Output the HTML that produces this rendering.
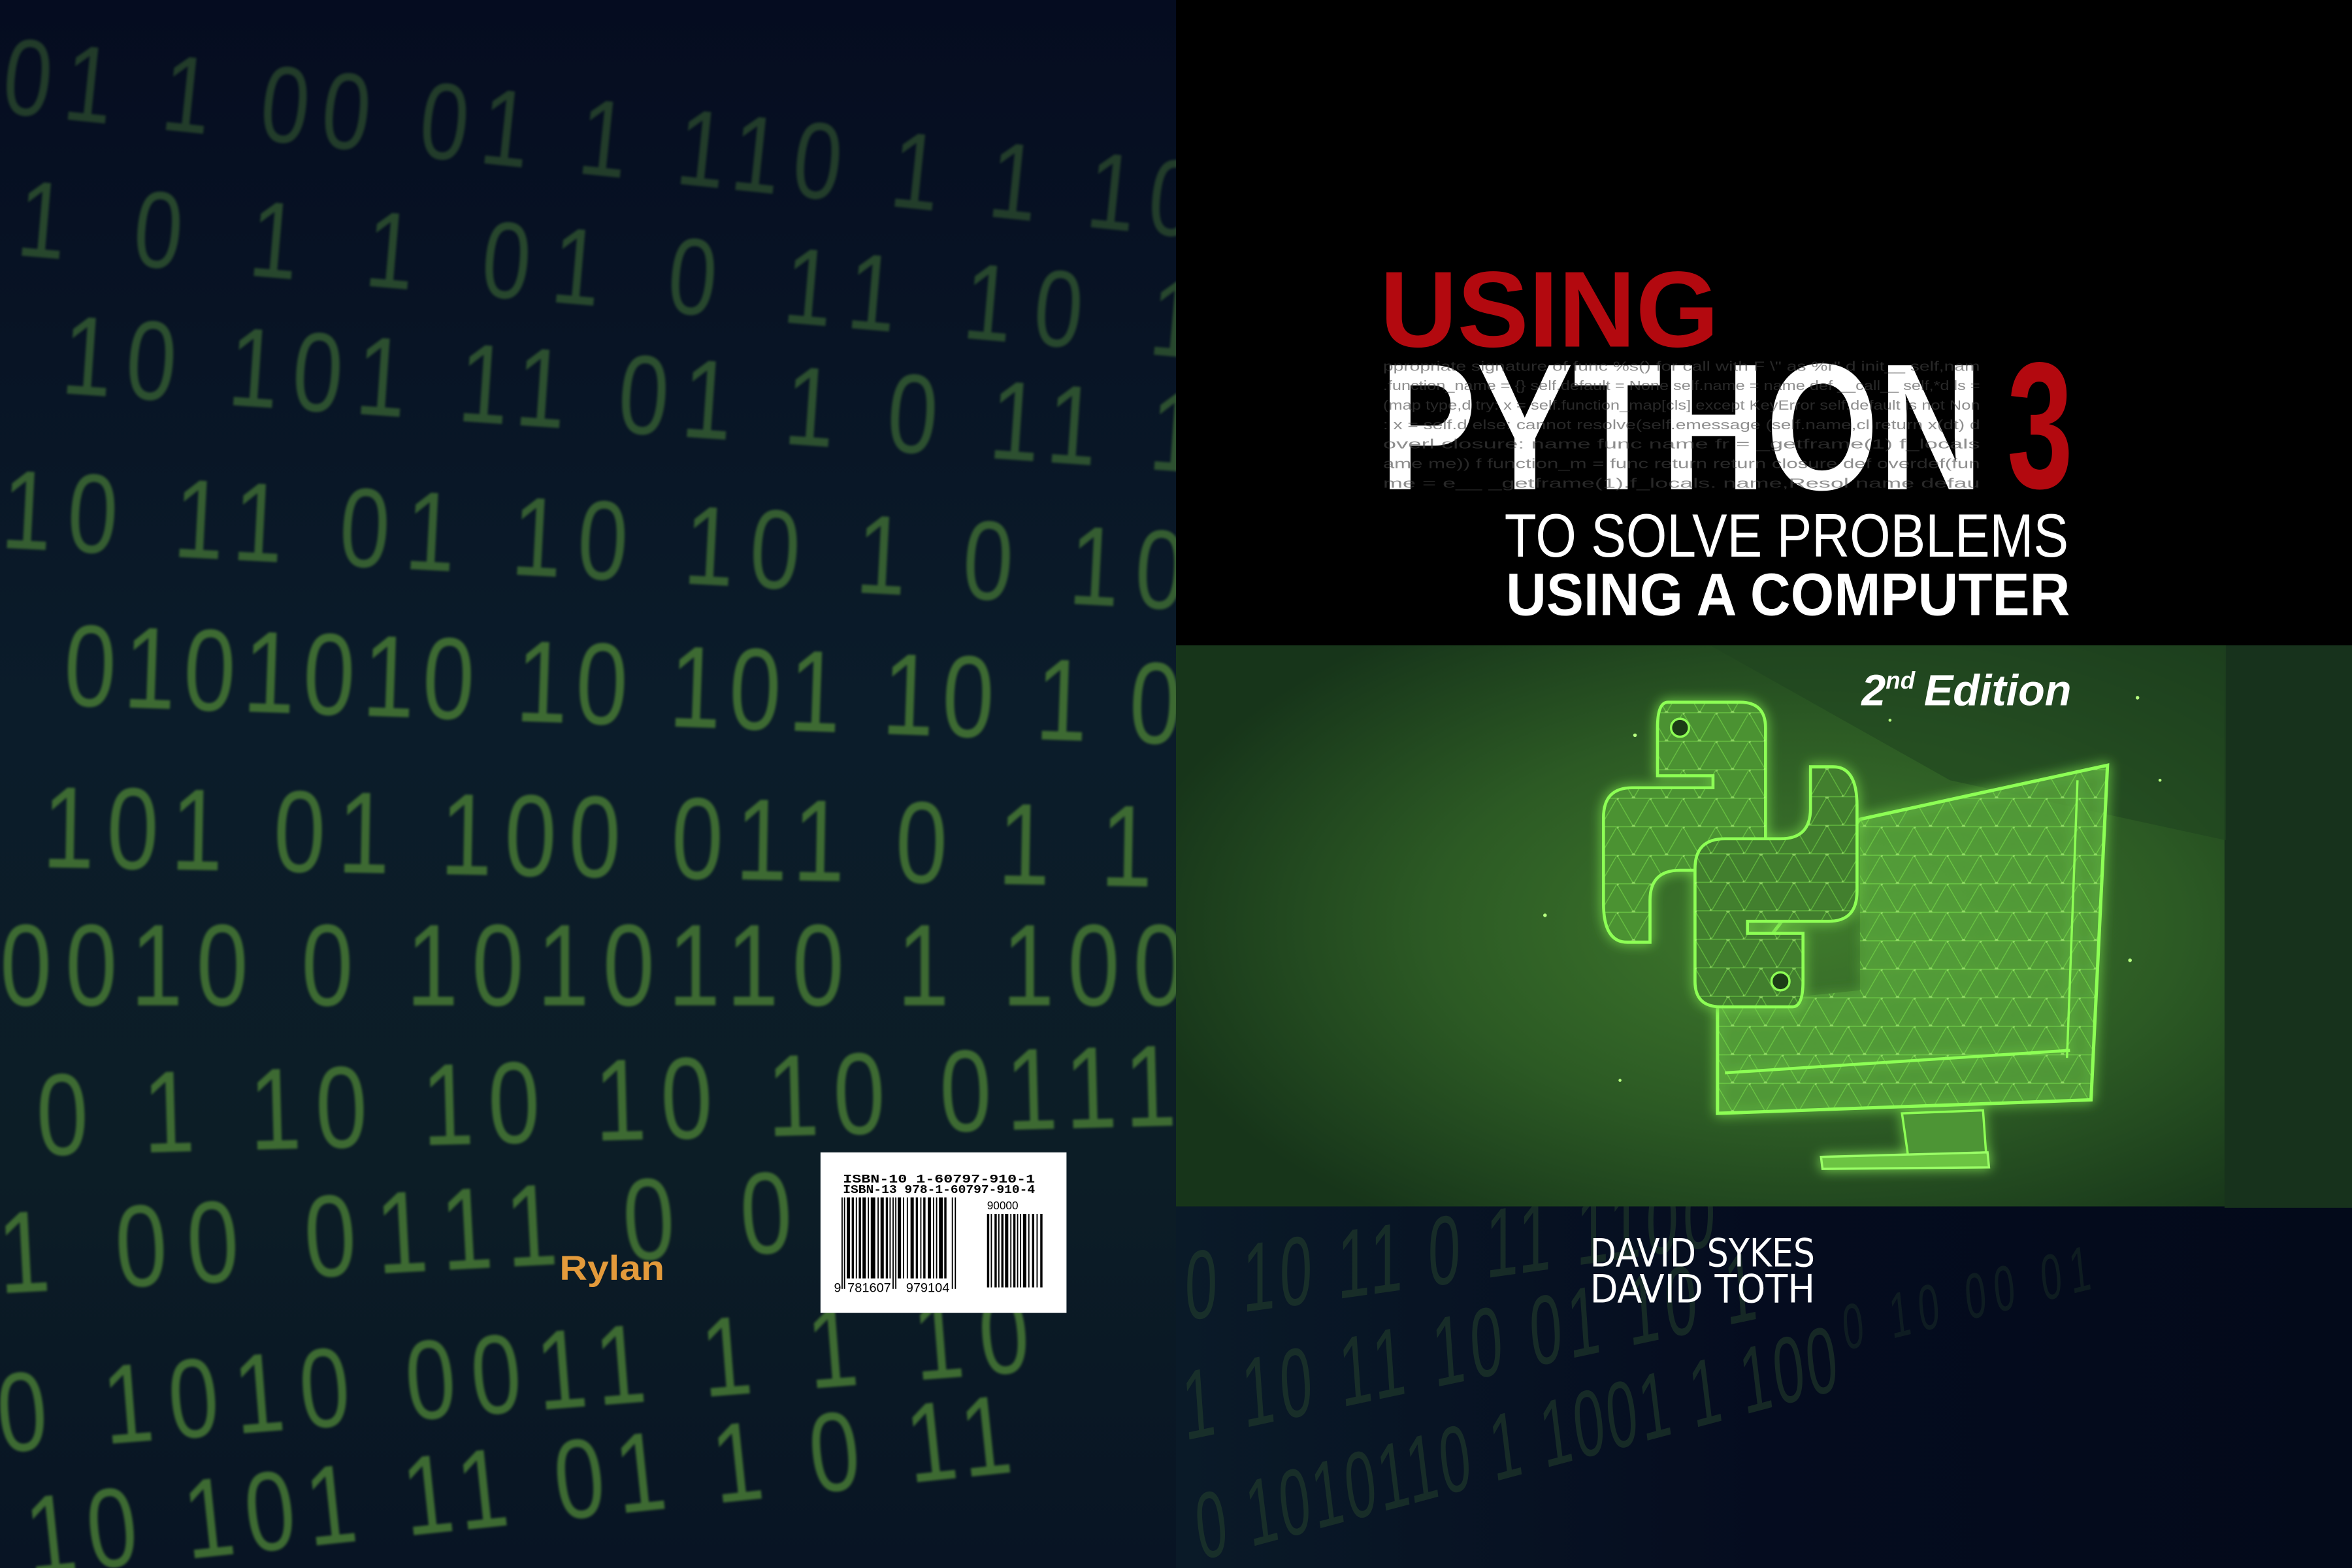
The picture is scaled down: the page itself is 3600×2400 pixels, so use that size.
<!DOCTYPE html>
<html><head><meta charset="utf-8"><style>
html,body{margin:0;padding:0;background:#060e20;}
svg{display:block;}
</style></head><body>
<svg width="3600" height="2400" viewBox="0 0 1568 1045" preserveAspectRatio="none" xmlns="http://www.w3.org/2000/svg">
<defs>
<linearGradient id="lbg" x1="0" y1="0" x2="0" y2="1">
<stop offset="0" stop-color="#050c20"/><stop offset="0.45" stop-color="#0b1c2a"/><stop offset="0.75" stop-color="#0c1d26"/><stop offset="1" stop-color="#081424"/>
</linearGradient>
<linearGradient id="rbg" x1="0" y1="0" x2="1" y2="0">
<stop offset="0" stop-color="#0a1a28"/><stop offset="0.5" stop-color="#050c1f"/><stop offset="1" stop-color="#030a1a"/>
</linearGradient>
<radialGradient id="gbg" cx="0.6" cy="0.5" r="0.65">
<stop offset="0" stop-color="#3f7a2c"/><stop offset="0.55" stop-color="#2c5a24"/><stop offset="1" stop-color="#17351a"/>
</radialGradient>
<pattern id="mesh" width="22" height="19" patternUnits="userSpaceOnUse">
<path d="M0,0 L22,0 M0,0 L11,19 L22,0 M0,19 L22,19" stroke="#8cff55" stroke-width="0.6" fill="none" opacity="0.7"/>
<circle cx="0" cy="0" r="1.3" fill="#b6ff80"/><circle cx="11" cy="19" r="1.3" fill="#b6ff80"/>
</pattern>
<clipPath id="leftclip"><rect x="0" y="0" width="784" height="1045"/></clipPath>
<filter id="glow" x="-20%" y="-20%" width="140%" height="140%"><feGaussianBlur stdDeviation="4" result="b"/><feMerge><feMergeNode in="b"/><feMergeNode in="SourceGraphic"/></feMerge></filter>
<filter id="soft"><feGaussianBlur stdDeviation="0.8"/></filter>
</defs>

<rect x="0" y="0" width="784" height="1045" fill="url(#lbg)"/>
<rect x="784" y="803" width="784" height="242" fill="url(#rbg)"/>

<!-- left digits -->
<g clip-path="url(#leftclip)">
<g font-family="Liberation Sans, sans-serif" fill="#3c6a33" filter="url(#soft)" lengthAdjust="spacing">
<g opacity="0.5"><text transform="translate(0,75) rotate(6) scale(1,1.25)" font-size="58" textLength="800" lengthAdjust="spacing">01  1  00  01  1  110  1  1  10</text></g>
<g opacity="0.6"><text transform="translate(10,170) rotate(5) scale(1,1.25)" font-size="58" textLength="790" lengthAdjust="spacing">1  0  1  1  01  0  11  10  1</text></g>
<g opacity="0.7"><text transform="translate(40,262) rotate(4) scale(1,1.25)" font-size="60" textLength="760" lengthAdjust="spacing">10  101  11  01  1  0  11  1</text></g>
<g opacity="0.85"><text transform="translate(0,365) rotate(3) scale(1,1.25)" font-size="60" textLength="790" lengthAdjust="spacing">10  11  01  10  10  1  0  10</text></g>
<text transform="translate(42,470) rotate(2) scale(1,1.25)" font-size="62" textLength="745" lengthAdjust="spacing">0101010 10  101  10  1 0</text>
<text transform="translate(28,578) rotate(1) scale(1,1.25)" font-size="62" textLength="740" lengthAdjust="spacing">101  01  100  011  0  1  1</text>
<text transform="translate(0,670) rotate(0) scale(1,1.25)" font-size="62" textLength="790" lengthAdjust="spacing">0010  0  1010110  1  100</text>
<text transform="translate(25,770) rotate(-1.5) scale(1,1.25)" font-size="62" textLength="760" lengthAdjust="spacing">0  1  10  10  10  10  0111</text>
<text transform="translate(0,862) rotate(-3) scale(1,1.25)" font-size="62" textLength="530" lengthAdjust="spacing">1  00  0111 0  0</text>
<text transform="translate(0,968) rotate(-4.5) scale(1,1.25)" font-size="60" textLength="690" lengthAdjust="spacing">0  1010  0011  1  1  10</text>
<text transform="translate(20,1050) rotate(-6) scale(1,1.25)" font-size="60" textLength="660" lengthAdjust="spacing">10  101  11  01  1  0  11</text>
</g>
</g>
<!-- right bottom faint digits -->
<g font-family="Liberation Sans, sans-serif" fill="#27452c" opacity="0.5">
<text transform="translate(790,880) rotate(-8) skewX(-8) scale(0.85,1.4)" font-size="46" textLength="420" lengthAdjust="spacing">0  10  11  0  11 1100</text>
<text transform="translate(790,960) rotate(-12) skewX(-8) scale(0.85,1.4)" font-size="46" textLength="460" lengthAdjust="spacing">1  10   11  10  01  10  1</text>
<text transform="translate(800,1040) rotate(-15) skewX(-8) scale(0.85,1.4)" font-size="44" textLength="520" lengthAdjust="spacing">0  1010110  1  1001  1  100</text>
<text transform="translate(1230,900) rotate(-14) skewX(-8) scale(0.85,1.4)" font-size="30" textLength="200" lengthAdjust="spacing" opacity="0.6">0  10  00  01</text>
</g>

<rect x="784" y="0" width="784" height="431" fill="#000"/>
<rect x="784" y="430" width="700" height="374" fill="url(#gbg)"/>
<rect x="1483" y="430" width="85" height="375" fill="#17321c"/>
<polygon points="1140,430 1484,430 1484,560 1300,520" fill="#1f4420" opacity="0.6"/>

<g filter="url(#glow)">
<polygon points="1240,546 1405,510 1394,733 1145,742 1145,670 1240,660" fill="#58a43a" opacity="0.55"/>
<polygon points="1240,546 1405,510 1394,733 1145,742 1145,670 1240,660" fill="url(#mesh)" opacity="0.6"/>
<polygon points="1240,546 1405,510 1394,733 1145,742 1145,670" fill="none" stroke="#8dff55" stroke-width="2.2"/>
<line x1="1150" y1="715" x2="1380" y2="700" stroke="#8dff55" stroke-width="2"/>
<line x1="1385" y1="520" x2="1378" y2="705" stroke="#8dff55" stroke-width="1.5"/>
<polygon points="1268,742 1322,740 1324,768 1272,770" fill="#4e9534" stroke="#8dff55" stroke-width="1.5"/>
<polygon points="1214,771 1325,768 1326,778 1215,779" fill="#6cc443" stroke="#9aff66" stroke-width="1.5"/>
</g>
<g filter="url(#glow)">
<path d="M1112,468 H1160 Q1177,468 1177,485 V560 Q1177,580 1157,580 H1120 Q1100,580 1100,600 V628 H1085 Q1069,628 1069,602 V545 Q1069,525 1088,525 H1142 V517 H1105 V485 Q1105,468 1112,468 Z" fill="#4c9233" stroke="#8dff55" stroke-width="2"/>
<path d="M1112,468 H1160 Q1177,468 1177,485 V560 Q1177,580 1157,580 H1120 Q1100,580 1100,600 V628 H1085 Q1069,628 1069,602 V545 Q1069,525 1088,525 H1142 V517 H1105 V485 Q1105,468 1112,468 Z" fill="url(#mesh)" opacity="0.6"/>
<g transform="rotate(180 1153.5 569.5)">
<path d="M1112,468 H1160 Q1177,468 1177,485 V560 Q1177,580 1157,580 H1120 Q1100,580 1100,600 V628 H1085 Q1069,628 1069,602 V545 Q1069,525 1088,525 H1142 V517 H1105 V485 Q1105,468 1112,468 Z" fill="#427f2d" stroke="#8dff55" stroke-width="2"/>
<path d="M1112,468 H1160 Q1177,468 1177,485 V560 Q1177,580 1157,580 H1120 Q1100,580 1100,600 V628 H1085 Q1069,628 1069,602 V545 Q1069,525 1088,525 H1142 V517 H1105 V485 Q1105,468 1112,468 Z" fill="url(#mesh)" opacity="0.6"/>
</g>
<circle cx="1120" cy="485" r="6" fill="#1e3d18" stroke="#8dff55" stroke-width="1.5"/>
<circle cx="1187" cy="654" r="6" fill="#1e3d18" stroke="#8dff55" stroke-width="1.5"/>
</g>
<g fill="#b6ff80">
<circle cx="1090" cy="490" r="1.2"/><circle cx="1030" cy="610" r="1.2"/><circle cx="1425" cy="465" r="1.2"/><circle cx="1420" cy="640" r="1.2"/><circle cx="1260" cy="480" r="1"/><circle cx="1080" cy="720" r="1"/><circle cx="1440" cy="520" r="1"/>
</g>

<text x="920" y="231" font-family="Liberation Sans, sans-serif" font-weight="bold" font-size="72" fill="#b3090f" textLength="226" lengthAdjust="spacingAndGlyphs">USING</text>
<text x="920" y="326" font-family="Liberation Sans, sans-serif" font-weight="bold" font-size="120" fill="#ffffff" textLength="402" lengthAdjust="spacingAndGlyphs">PYTHON</text>
<g font-family="Liberation Sans, sans-serif" font-size="9" fill="#444" opacity="0.6">
<text x="922" y="247" textLength="398" lengthAdjust="spacingAndGlyphs">ppropriate signature of func %s() for call with F \" as %r" d init__ self,nam</text>
<text x="922" y="260" textLength="398" lengthAdjust="spacingAndGlyphs">.function_name = {} self.default = None self.name = name def __call__ self,*d ls =</text>
<text x="922" y="273" textLength="398" lengthAdjust="spacingAndGlyphs">(map type,d try: x = self.function_map[cls] except KeyError self.default is not Non</text>
<text x="922" y="286" textLength="398" lengthAdjust="spacingAndGlyphs">: x = self.d else: cannot resolve(self.emessage (self.name,cl return x(dt) d</text>
<text x="922" y="299" textLength="398" lengthAdjust="spacingAndGlyphs">overl closure: name func name fr = _getframe(1) f_locals</text>
<text x="922" y="312" textLength="398" lengthAdjust="spacingAndGlyphs">ame me)) f function_m = func return return closure def overdef(fun</text>
<text x="922" y="325" textLength="398" lengthAdjust="spacingAndGlyphs">me = e__ _getframe(1).f_locals. name,Resol name defau</text>
</g>
<text x="1338" y="325" font-family="Liberation Sans, sans-serif" font-weight="bold" font-size="120" fill="#b3090f" textLength="44" lengthAdjust="spacingAndGlyphs">3</text>
<text x="1003" y="371" font-family="Liberation Sans, sans-serif" font-size="41" fill="#fff" textLength="376" lengthAdjust="spacingAndGlyphs">TO SOLVE PROBLEMS</text>
<text x="1004" y="410" font-family="Liberation Sans, sans-serif" font-weight="bold" font-size="40" fill="#fff" textLength="376" lengthAdjust="spacingAndGlyphs">USING A COMPUTER</text>
<text x="1241" y="470" font-family="Liberation Sans, sans-serif" font-weight="bold" font-style="italic" font-size="29" fill="#fff">2<tspan font-size="16" dy="-11">nd</tspan><tspan dy="11" dx="6">Edition</tspan></text>

<text x="1060" y="844" font-family="DejaVu Sans Condensed, Liberation Sans Narrow, sans-serif" font-size="26" fill="#fff" textLength="150" lengthAdjust="spacingAndGlyphs">DAVID SYKES</text>
<text x="1060" y="868" font-family="DejaVu Sans Condensed, Liberation Sans Narrow, sans-serif" font-size="26" fill="#fff" textLength="150" lengthAdjust="spacingAndGlyphs">DAVID TOTH</text>

<text x="373" y="853" font-family="Liberation Sans, sans-serif" font-weight="bold" font-size="23" fill="#e39a3b" textLength="70" lengthAdjust="spacingAndGlyphs">Rylan</text>

<rect x="547" y="768" width="164" height="107" fill="#fff"/>
<text x="562" y="788" font-family="Liberation Mono, monospace" font-weight="bold" font-size="8" fill="#000" textLength="128" lengthAdjust="spacingAndGlyphs">ISBN-10 1-60797-910-1</text>
<text x="562" y="795" font-family="Liberation Mono, monospace" font-weight="bold" font-size="8" fill="#000" textLength="128" lengthAdjust="spacingAndGlyphs">ISBN-13 978-1-60797-910-4</text>
<g fill="#000">
<rect x="561" y="798" width="0.8" height="61"/><rect x="562.6" y="798" width="0.8" height="61"/>
<rect x="564.5" y="798" width="2.2" height="54"/><rect x="567.8" y="798" width="1.5" height="54"/><rect x="570.5" y="798" width="0.8" height="54"/>
<rect x="572.5" y="798" width="1.5" height="54"/><rect x="575" y="798" width="2.2" height="54"/><rect x="578.5" y="798" width="0.8" height="54"/>
<rect x="580.5" y="798" width="3" height="54"/><rect x="585" y="798" width="0.8" height="54"/><rect x="587" y="798" width="2.2" height="54"/>
<rect x="590.5" y="798" width="1.5" height="54"/><rect x="593" y="798" width="0.8" height="54"/>
<rect x="595" y="798" width="0.8" height="61"/><rect x="596.8" y="798" width="0.8" height="61"/>
<rect x="598.5" y="798" width="2.2" height="54"/><rect x="602" y="798" width="0.8" height="54"/><rect x="604.5" y="798" width="0.8" height="54"/>
<rect x="607" y="798" width="2.2" height="54"/><rect x="610.5" y="798" width="1.5" height="54"/><rect x="613.5" y="798" width="0.8" height="54"/>
<rect x="615.5" y="798" width="1.5" height="54"/><rect x="618.5" y="798" width="2.2" height="54"/><rect x="622" y="798" width="0.8" height="54"/>
<rect x="624" y="798" width="0.8" height="54"/><rect x="626" y="798" width="2.5" height="54"/><rect x="629.5" y="798" width="1.5" height="54"/>
<rect x="634.5" y="798" width="0.8" height="61"/><rect x="636.5" y="798" width="0.8" height="61"/>
<rect x="658" y="809" width="1.5" height="49"/><rect x="660.5" y="809" width="0.8" height="49"/><rect x="663" y="809" width="1.5" height="49"/>
<rect x="665.5" y="809" width="0.8" height="49"/><rect x="667.5" y="809" width="1.5" height="49"/><rect x="670" y="809" width="2.2" height="49"/>
<rect x="673.5" y="809" width="0.8" height="49"/><rect x="675.5" y="809" width="1.5" height="49"/><rect x="678" y="809" width="0.8" height="49"/>
<rect x="680" y="809" width="0.8" height="49"/><rect x="682" y="809" width="2.2" height="49"/><rect x="685.5" y="809" width="0.8" height="49"/>
<rect x="688" y="809" width="1.5" height="49"/><rect x="691" y="809" width="0.8" height="49"/><rect x="693.5" y="809" width="1.5" height="49"/>
</g>
<text x="658" y="806" font-family="Liberation Sans, sans-serif" font-size="7.5" fill="#000">90000</text>
<text x="556" y="861" font-family="Liberation Sans, sans-serif" font-size="8.5" fill="#000">9</text>
<text x="565" y="861" font-family="Liberation Sans, sans-serif" font-size="8.5" fill="#000" textLength="29" lengthAdjust="spacingAndGlyphs">781607</text>
<text x="604" y="861" font-family="Liberation Sans, sans-serif" font-size="8.5" fill="#000" textLength="29" lengthAdjust="spacingAndGlyphs">979104</text>
</svg>
</body></html>
